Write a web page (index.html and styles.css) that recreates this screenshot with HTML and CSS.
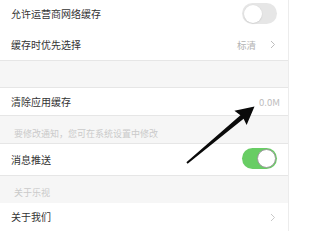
FILE: index.html
```html
<!DOCTYPE html>
<html lang="zh-CN">
<head>
<meta charset="utf-8">
<link rel="stylesheet" href="styles.css">
</head>
<body>
<div class="screen">
  <div class="row r1">
    <span class="label">允许运营商网络缓存</span>
    <span class="switch off"><span class="knob"></span></span>
  </div>
  <div class="row r2 bordered">
    <span class="label">缓存时优先选择</span>
    <span class="value">标清</span>
    <svg class="chev" width="6" height="9" viewBox="0 0 6 9"><polyline points="1,1 4.5,4.5 1,8" fill="none" stroke="#bdbdbd" stroke-width="1"/></svg>
  </div>
  <div class="band b1"></div>
  <div class="row r3 bordered">
    <span class="label">清除应用缓存</span>
    <span class="value size">0.0M</span>
  </div>
  <div class="band b2"><span class="note">要修改通知，您可在系统设置中修改</span></div>
  <div class="row r4 bordered">
    <span class="label">消息推送</span>
    <span class="switch on"><span class="knob"></span></span>
  </div>
  <div class="band b3"><span class="note">关于乐视</span></div>
  <div class="row r5">
    <span class="label">关于我们</span>
    <svg class="chev" width="6" height="9" viewBox="0 0 6 9"><polyline points="1,1 4.5,4.5 1,8" fill="none" stroke="#c8c8c8" stroke-width="1"/></svg>
  </div>
</div>
<svg class="arrow" width="294" height="232" viewBox="0 0 294 232">
  <polygon points="186.4,162.2 240.4,115.2 234.4,110.8 254.5,106.5 246.6,125 243.6,118.8 187.6,163.8" fill="#0a0a0a"/>
</svg>
</body>
</html>
```
FILE: styles.css
```css
* { box-sizing: border-box; }
html, body {
  margin: 0;
  padding: 0;
  background: #ffffff;
  width: 294px;
  height: 232px;
  overflow: hidden;
  font-family: "Noto Sans CJK SC", "Noto Sans", sans-serif;
}
.screen {
  width: 289px;
  margin-top: -2px;
  border-right: 1px solid #ececec;
  display: flex;
  flex-direction: column;
}
.row {
  display: flex;
  align-items: center;
  padding: 0 11px 0 11px;
  background: #fff;
}
.bordered { border-bottom: 1px solid #e6e6e6; }
.r1 { height: 31px; }
.r2 { height: 32px; }
.r3 { height: 28px; }
.r4 { height: 32px; }
.r5 { height: 28px; }
.label {
  font-size: 10px;
  line-height: 12px;
  color: #333;
  flex: 1;
}
.value {
  font-size: 9.5px;
  line-height: 12px;
  color: #b3b3b3;
}
.r2 .value { margin-right: 14px; }
.r2 .chev { margin-right: 1px; }
.r5 .chev { margin-right: 1px; }
.size { margin-right: -3px; color: #bcbcbc; }
.band {
  background: #f6f6f6;
  display: flex;
  align-items: center;
  padding-left: 14px;
}
.b1 { height: 27px; border-bottom: 1px solid #e6e6e6; }
.b2 { height: 28px; padding-top: 7px; border-bottom: 1px solid #e6e6e6; }
.b3 { height: 27px; padding-top: 6px; }
.note {
  font-size: 9px;
  line-height: 11px;
  color: #cacaca;
}
.switch {
  width: 35px;
  height: 21px;
  border-radius: 11px;
  position: relative;
  flex: none;
}
.switch.off { background: #e6e6e6; margin-top: 0; }
.switch.on { background: #68cd64; margin-top: -2px; }
.knob {
  position: absolute;
  top: 1.5px;
  width: 18px;
  height: 18px;
  border-radius: 50%;
  background: #fff;
}
.off .knob { left: 1.5px; box-shadow: 0 0.5px 1.5px rgba(0,0,0,0.15); }
.on .knob { right: 1px; top: 1px; width: 19px; height: 19px; border: 1px solid #9a9a9a; }
.arrow {
  position: absolute;
  left: 0;
  top: 0;
}
```
